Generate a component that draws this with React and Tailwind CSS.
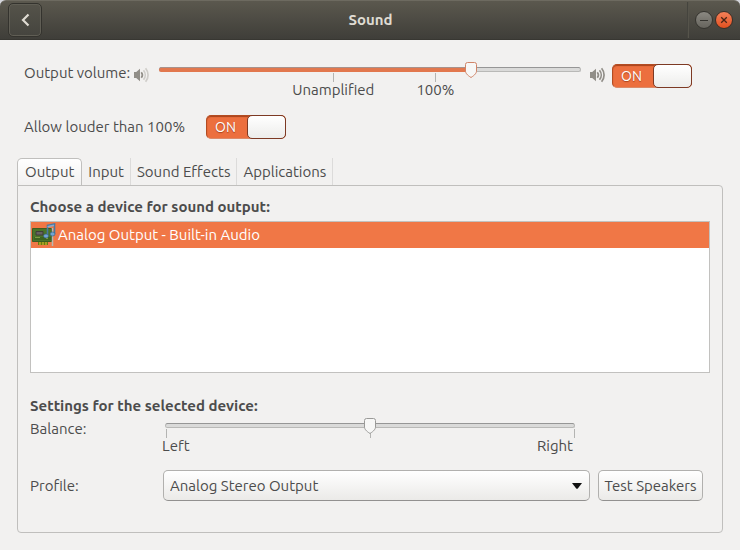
import { useState } from "react";

function VolumeIcon({ low }) {
  const outer = low ? "#cfcdc9" : "#918e88";
  return (
    <svg className="block h-4 w-4 shrink-0" viewBox="0 0 16 16" fill="none" aria-hidden="true">
      <path d="M1 5h2.2L7 1.8v12.4L3.2 11H1z" fill="#918e88" />
      <path d="M8.300 5.200c1.300 1.600 1.300 4 0 5.600" stroke="#918e88" strokeWidth="1.700" />
      <path d="M10.500 3.200c2.300 2.800 2.300 6.800 0 9.600" stroke={outer} strokeWidth="1.700" />
      <path d="M12.600 1.200c3.300 4 3.300 9.600 0 13.600" stroke={outer} strokeWidth="1.700" />
    </svg>
  );
}

function Thumb({ accent, percent }) {
  return (
    <svg
      className="pointer-events-none absolute top-0 h-4 w-3 -translate-x-1/2"
      style={{ left: `${percent}%` }}
      viewBox="0 0 12 16"
      aria-hidden="true"
    >
      <path
        d="M2.500.500h7a2 2 0 0 1 2 2V9c0 2-1.600 4-5.500 6.500C2.100 13 .500 11 .500 9V2.500a2 2 0 0 1 2-2z"
        fill="#f7f7f6"
        stroke={accent ? "#d08468" : "#9a9a98"}
      />
    </svg>
  );
}

function Slider({ label, value, onChange, accent, children }) {
  return (
    <div className="relative h-10">
      <div className="absolute inset-x-0 top-[5px] h-[5px] rounded-sm border border-[#b9b9b7] border-t-[#969696] bg-[#dadad9]" />
      {accent && (
        <div
          className="absolute top-[5px] left-0 h-[5px] rounded-l-sm border-t border-[#a8928c] bg-[#e2784e]"
          style={{ width: `${value}%` }}
        />
      )}
      {children}
      <Thumb accent={accent} percent={value} />
      <input
        type="range"
        min="0"
        max="100"
        step="any"
        aria-label={label}
        value={value}
        onChange={(e) => onChange(Number(e.target.value))}
        className="absolute inset-x-0 top-0 m-0 h-4 w-full cursor-pointer opacity-0"
      />
    </div>
  );
}

function Tick({ className }) {
  return <span className={`absolute top-[11px] h-[9px] w-px bg-[#b4b4b2] ${className}`} />;
}

function Switch({ id, label, checked, onChange }) {
  return (
    <span className="relative block h-6 w-20 shrink-0">
      <input
        id={id}
        type="checkbox"
        aria-label={label}
        checked={checked}
        onChange={(e) => onChange(e.target.checked)}
        className="peer absolute inset-0 h-full w-full cursor-pointer appearance-none rounded-[5px] border border-[#a9a9a7] bg-[#d5d5d3] checked:border-[#b34c22] checked:border-b-[#dc8a68] checked:bg-[#ec6f3e] checked:shadow-[inset_0_1px_1px_#a8431c]"
      />
      <span className="pointer-events-none absolute inset-y-0 left-0 hidden w-[39px] text-center text-[14px] leading-6 text-white [text-shadow:0_1px_1px_#a8431c] peer-checked:block">
        ON
      </span>
      <span className="pointer-events-none absolute inset-y-0 left-0 w-[39px] rounded-[5px] border border-[#999997] bg-linear-to-b from-white to-[#ededeb] peer-checked:right-0 peer-checked:left-auto peer-checked:border-[#7d3a24]" />
    </span>
  );
}

function SoundCardIcon() {
  return (
    <svg className="h-6 w-6 shrink-0" viewBox="0 0 24 24" aria-hidden="true">
      <path d="M.500 5.500h19v13H.500z" fill="#4a7429" stroke="#3b5c22" />
      <path d="M2 14h17v3H2z" fill="#3c6420" />
      <path d="M4 8.500h7v3.500H4z" fill="#66635f" stroke="#3f3d38" />
      <path d="M14 13h2v3h-2zM3 14h5v1H3z" fill="#7c9b45" />
      <path d="M6 19h10v3H6z" fill="#6c7912" />
      <path d="M8 19v3M11 19v3M14 19v3" stroke="#c9ba2a" strokeWidth="1.200" />
      <path d="M20.500 5v18" stroke="#b8b8b2" strokeWidth="1.500" />
      <path d="M15.500 13V2.500l7-1.500v10" fill="none" stroke="#4878a2" strokeWidth="1.600" />
      <path d="M15.500 3.800 22 2.200" stroke="#83abd0" strokeWidth="1.500" />
      <ellipse cx="14" cy="13" rx="2.500" ry="2" fill="#72a5d3" stroke="#315c83" strokeWidth=".6" />
      <ellipse cx="20.500" cy="11" rx="2.500" ry="2" fill="#72a5d3" stroke="#315c83" strokeWidth=".6" />
    </svg>
  );
}

const tabs = ["Output", "Input", "Sound Effects", "Applications"];

export default function App() {
  const [volume, setVolume] = useState(74);
  const [balance, setBalance] = useState(50);
  const [enabled, setEnabled] = useState(true);
  const [louder, setLouder] = useState(true);
  const [tab, setTab] = useState("Output");

  return (
    <div className="flex min-h-screen flex-col bg-[#f2f1f0] font-['Ubuntu','Noto_Sans',sans-serif] text-[15px] leading-5 text-[#4c4c4c]">
      <div className="bg-[#d5d6dc]">
        <header className="grid h-10 grid-cols-[1fr_auto_1fr] items-center rounded-t-md border-t border-b border-t-[#6d6a60] border-b-[#383732] bg-linear-to-b from-[#5b584e] to-[#3f3e39] pr-[7px] pl-2">
          <button
            type="button"
            aria-label="Back"
            className="flex h-[34px] w-[34px] items-center justify-center rounded-[5px] border border-[#34332e] bg-linear-to-b from-[#55534a] to-[#45443e] shadow-[inset_0_0_0_1px_#605e55]"
          >
            <svg className="h-4 w-4" viewBox="0 0 16 16" fill="none" aria-hidden="true">
              <path d="M11.500 2.500 6 8l5.500 5.500" stroke="#dfdbd2" strokeWidth="2.200" />
            </svg>
          </button>
          <h1 className="font-bold text-[#dfdbd2]">Sound</h1>
          <div className="flex items-center justify-end gap-0.5">
            <span className="mr-1 h-9 w-0.5 border-l border-[#45443e] bg-[#56544b]" />
            <button
              type="button"
              aria-label="Minimize"
              className="flex h-[18px] w-[18px] items-center justify-center rounded-full border border-[#35342f] bg-linear-to-b from-[#8b8982] to-[#66645d]"
            >
              <svg className="h-2 w-2" viewBox="0 0 8 8" aria-hidden="true">
                <path d="M0 4.500h8" stroke="#35342f" />
              </svg>
            </button>
            <button
              type="button"
              aria-label="Close"
              className="flex h-[18px] w-[18px] items-center justify-center rounded-full border border-[#3c2f27] bg-linear-to-b from-[#f58058] to-[#e2501c]"
            >
              <svg className="h-2 w-2" viewBox="0 0 8 8" aria-hidden="true">
                <path d="m1.200 1.200 5.600 5.600m0-5.600L1.200 6.800" stroke="#4a2415" strokeWidth="1.300" />
              </svg>
            </button>
          </div>
        </header>
      </div>

      <main className="flex flex-1 flex-col px-[17px] pt-[22px] pb-[17px]">
        <section className="pr-[31px] pl-[7px]">
          <div className="flex items-start">
            <label htmlFor="enabled" className="w-[109px] whitespace-nowrap pt-px">
              Output volume:
            </label>
            <div className="mr-[10px] pt-[5px]">
              <VolumeIcon low />
            </div>
            <div className="flex-1">
              <Slider label="Output volume" value={volume} onChange={setVolume} accent>
                <Tick className="left-[41.3%]" />
                <Tick className="left-[65.5%]" />
                <span className="absolute top-[18px] left-[41.3%] -translate-x-1/2">Unamplified</span>
                <span className="absolute top-[18px] left-[65.5%] -translate-x-1/2">100%</span>
              </Slider>
            </div>
            <div className="mr-[7px] ml-2 pt-[5px]">
              <VolumeIcon />
            </div>
            <div className="pt-0.5">
              <Switch id="enabled" label="Output enabled" checked={enabled} onChange={setEnabled} />
            </div>
          </div>
          <div className="mt-[13px] flex items-center">
            <label htmlFor="louder" className="w-[182px]">
              Allow louder than 100%
            </label>
            <Switch id="louder" label="Allow louder than 100%" checked={louder} onChange={setLouder} />
          </div>
        </section>

        <div role="tablist" className="mt-[19px] flex h-[27px]">
          {tabs.map((name) => (
            <button
              key={name}
              type="button"
              role="tab"
              aria-selected={tab === name}
              onClick={() => setTab(name)}
              className={
                tab === name
                  ? "rounded-t-[5px] border border-b-0 border-[#c0bfbd] bg-linear-to-b from-white to-[#f2f1f0] px-[7px]"
                  : "border-r border-[#dcdbda] px-[6px]"
              }
            >
              {name}
            </button>
          ))}
        </div>
        <section
          role="tabpanel"
          aria-label={tab}
          className="flex-1 rounded-sm rounded-tl-none border border-[#c0bfbd] px-3 pt-[11px] pb-3"
        >
          <h2 className="font-bold">Choose a device for sound output:</h2>
          <ul
            role="listbox"
            aria-label="Output devices"
            className="mt-1 h-[152px] border border-[#c2c1bf] bg-white"
          >
            <li
              role="option"
              aria-selected="true"
              className="flex h-[26px] items-center gap-0.5 bg-[#f07746] pl-px text-white"
            >
              <SoundCardIcon />
              Analog Output - Built-in Audio
            </li>
          </ul>

          <h2 className="mt-[23px] font-bold">Settings for the selected device:</h2>
          <div className="flex items-start pt-0.5">
            <span className="w-[135px] pt-px">Balance:</span>
            <div className="mr-[135px] flex-1">
              <Slider label="Balance" value={balance} onChange={setBalance}>
                <Tick className="left-px" />
                <Tick className="left-1/2" />
                <Tick className="right-0" />
                <span className="absolute top-[18px] -left-[3px]">Left</span>
                <span className="absolute top-[18px] right-0.5">Right</span>
              </Slider>
            </div>
          </div>
          <div className="mt-3 flex items-center pr-[7px]">
            <label htmlFor="profile" className="w-[133px]">
              Profile:
            </label>
            <div className="relative mr-2 flex-1">
              <select
                id="profile"
                className="block h-[31px] w-full appearance-none rounded-[5px] border border-[#b1b0ae] border-b-[#929190] bg-linear-to-b from-white to-[#ebeae8] px-[6px]"
              >
                <option>Analog Stereo Output</option>
              </select>
              <svg
                className="pointer-events-none absolute top-[13px] right-2 h-[6px] w-[10px]"
                viewBox="0 0 10 6"
                aria-hidden="true"
              >
                <path d="M0 0h10L6 5.200q-1 1-2 0z" fill="#111" />
              </svg>
            </div>
            <button
              type="button"
              className="h-[31px] w-[105px] whitespace-nowrap rounded-[5px] border border-[#b1b0ae] border-b-[#929190] bg-linear-to-b from-white to-[#ebeae8]"
            >
              Test Speakers
            </button>
          </div>
        </section>
      </main>
    </div>
  );
}
